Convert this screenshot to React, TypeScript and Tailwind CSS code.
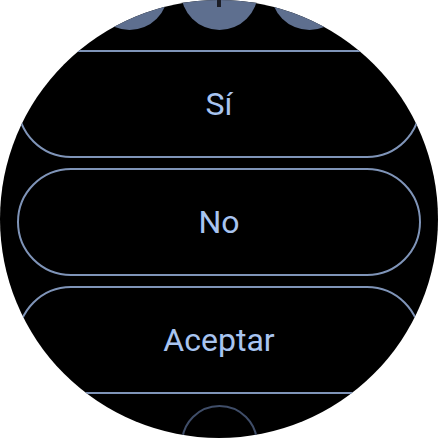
export default function App() {
  const buttons = ['Sí', 'No', 'Aceptar'];

  return (
    <div className="w-[438px] h-[438px] bg-white">
      <div className="w-[438px] h-[438px] rounded-full overflow-hidden bg-black flex flex-col items-center font-['Roboto',sans-serif]">
        {/* top row of round chips, mostly scrolled off */}
        <div className="flex gap-[13px] mt-[-47px] shrink-0">
          <div className="w-[77px] h-[77px] rounded-full bg-[#5e6f8f]" />
          <div className="relative w-[77px] h-[77px] rounded-full bg-[#5e6f8f]">
            <div className="absolute left-1/2 -translate-x-1/2 top-[44px] w-[9px] h-[3px] rounded-sm bg-[#1b1d26]" />
            <div className="absolute left-1/2 -translate-x-1/2 top-[46px] w-[4px] h-[8px] bg-[#1b1d26]" />
          </div>
          <div className="w-[77px] h-[77px] rounded-full bg-[#5e6f8f]" />
        </div>

        <div className="flex flex-col gap-[10px] mt-[20px] shrink-0">
          {buttons.map((label) => (
            <button
              key={label}
              className="w-[404px] h-[108px] rounded-full border-2 border-[#7f94b8] flex items-center justify-center text-[32px] leading-none text-[#a8c4f0]"
            >
              {label}
            </button>
          ))}
        </div>

        <div className="mt-[11px] w-[77px] h-[77px] rounded-full border-2 border-[#3f4d68] shrink-0" />
      </div>
    </div>
  );
}
